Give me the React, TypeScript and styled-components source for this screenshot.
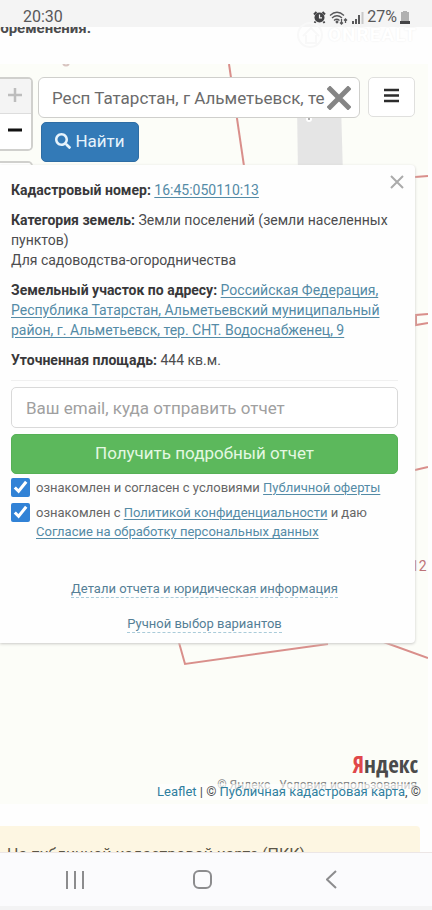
import React from "react";
import styled, { createGlobalStyle } from "styled-components";
import { FaSearch } from "react-icons/fa";

const GlobalStyle = createGlobalStyle`
  *, *::before, *::after { box-sizing: border-box; }
  body { margin: 0; background: #fefefe; }
  button, input { font: inherit; }
`;

const Screen = styled.div`
  display: flex;
  flex-direction: column;
  height: 100vh;
  overflow: hidden;
  font-family: Roboto, "Noto Sans", sans-serif;
  font-size: 14px;
  line-height: 20px;
  color: #4c4c4e;
`;

const StatusBar = styled.header`
  position: relative;
  display: flex;
  flex: none;
  justify-content: space-between;
  align-items: flex-end;
  height: 27px;
  padding: 0 22px 0 23px;
  background: #f4f4f4;
  color: #58585a;
  font-size: 16px;
  line-height: 20px;
`;

const StatusIcons = styled.div`
  display: flex;
  align-items: center;
  gap: 3px;
  height: 20px;
`;

const Watermark = styled.div`
  position: absolute;
  z-index: 2;
  top: 20px;
  right: 0;
  display: flex;
  align-items: center;
  width: 136px;
  overflow: hidden;
  gap: 4px;
  color: #fff;
  font-size: 19px;
  font-weight: 700;
  line-height: 30px;
  letter-spacing: 1px;
  text-shadow: 0 0 2px #ececec;
`;

const Content = styled.main`
  flex: 1;
  min-height: 0;
  overflow: hidden;
`;

const Heading = styled.div`
  display: flex;
  justify-content: flex-end;
  align-items: flex-start;
  width: 91px;
  height: 37px;
  overflow: hidden;
`;

const HeadingText = styled.strong`
  flex: none;
  margin-top: -9px;
  font-size: 15px;
  line-height: 20px;
`;

const MapArea = styled.section`
  position: relative;
  margin-right: 4px;
  padding-top: 13px;
  overflow: hidden;
  background: #fcfdf8;
`;

const MapLines = styled.svg`
  position: absolute;
  top: 0;
  left: 0;
`;

const Controls = styled.div`
  position: relative;
  display: flex;
  align-items: flex-start;
  gap: 8px;
  height: 88px;
  padding-right: 13px;
  overflow: hidden;
`;

const ZoomColumn = styled.div`
  display: flex;
  flex: none;
  flex-direction: column;
  gap: 10px;
  width: 33px;
  margin-right: -3px;
`;

const ZoomBox = styled.div`
  border: 2px solid #d0d0cd;
  border-left: 0;
  border-radius: 0 5px 5px 0;
  background: #fff;
  overflow: hidden;
`;

const ZoomButton = styled.button<{ $dim?: boolean }>`
  display: flex;
  align-items: center;
  justify-content: center;
  width: 100%;
  height: 35px;
  padding: 0 2px 3px 0;
  border: 0;
  border-bottom: ${(p) => (p.$dim ? "1px solid #ddd" : "0")};
  background: ${(p) => (p.$dim ? "#f4f4f4" : "#fff")};
  color: ${(p) => (p.$dim ? "#bdbdbd" : "#111")};
`;

const SearchForm = styled.form`
  flex: 1;
  min-width: 0;
`;

const SearchField = styled.div`
  display: flex;
  align-items: center;
  height: 41px;
  padding: 0 8px 0 13px;
  border: 1px solid #cfcfcc;
  border-radius: 6px;
  background: #fff;
`;

const SearchInput = styled.input`
  flex: 1;
  min-width: 0;
  padding: 0;
  border: 0;
  outline: 0;
  background: none;
  color: #6b6b6b;
  font-size: 17px;
`;

const IconButton = styled.button`
  display: flex;
  padding: 0;
  border: 0;
  background: none;
`;

const FindButton = styled.button`
  display: flex;
  align-items: center;
  justify-content: center;
  gap: 4px;
  width: 98px;
  height: 40px;
  margin: 4px 0 0 3px;
  padding: 0 0 2px;
  border: 1px solid #2e6da4;
  border-radius: 5px;
  background: #337ab7;
  color: #e6f3fc;
  font-size: 17px;
`;

const MenuButton = styled.button`
  display: flex;
  flex: none;
  align-items: center;
  justify-content: center;
  width: 47px;
  height: 40px;
  padding: 0 0 4px;
  border: 1px solid #e0e0de;
  border-radius: 5px;
  background: #fff;
`;

const Panel = styled.article`
  position: relative;
  margin-right: 13px;
  padding: 15px 17px 8px 11px;
  border-radius: 0 4px 4px 0;
  background: #fefefe;
  box-shadow: 0 1px 3px #c9c9c6;
`;

const CloseButton = styled(IconButton)`
  position: absolute;
  top: 10px;
  right: 11px;
`;

const Para = styled.p`
  margin: 0 0 10px;
  b { color: #38383a; }
`;

const Link = styled.a`
  color: #548ba6;
  text-decoration: underline;
  text-underline-offset: 2px;
`;

const Divider = styled.hr`
  margin: 0 0 6px;
  border: 0;
  border-top: 1px solid #f0f0f0;
`;

const EmailInput = styled.input`
  display: block;
  width: 100%;
  height: 41px;
  padding: 0 14px;
  border: 1px solid #d9d9d9;
  border-radius: 5px;
  background: #fff;
  font-size: 17px;
  &::placeholder { color: #a0a0a0; opacity: 1; }
`;

const ReportButton = styled.button`
  display: block;
  width: 100%;
  height: 40px;
  margin: 6px 0 4px;
  padding: 0 0 2px;
  border: 1px solid #56b056;
  border-radius: 5px;
  background: #5cb85c;
  color: #e4f8e2;
  font-size: 17px;
`;

const Consent = styled.label`
  display: flex;
  gap: 6px;
  margin-bottom: 6px;
  color: #666;
  font-size: 13px;
  line-height: 19px;
`;

const Check = styled.input`
  flex: none;
  width: 19px;
  height: 19px;
  margin: 0;
  accent-color: #3182d6;
`;

const MoreLinks = styled.nav`
  display: flex;
  flex-direction: column;
  align-items: center;
  gap: 17px;
  padding: 33px 0 2px;
`;

const DashedLink = styled.a`
  border-bottom: 1px dashed #a9cbd9;
  color: #557f96;
  font-size: 13px;
  line-height: 17px;
  text-decoration: none;
`;

const MapFooter = styled.footer`
  position: relative;
  display: flex;
  flex-direction: column;
  align-items: flex-end;
  padding: 107px 7px 4px;
`;

const YandexLogo = styled.div`
  padding-right: 3px;
  font-family: "Liberation Sans Narrow", "Open Sans Condensed", "Liberation Sans", sans-serif;
  font-size: 23px;
  font-weight: 300;
  line-height: 28px;
  color: #4b4b4b;
  span { color: #e0474a; }
`;

const Copyright = styled.div`
  padding-right: 4px;
  color: #8a8a8a;
  font-size: 12px;
  line-height: 14px;
  white-space: pre;
`;

const Attribution = styled.div`
  position: relative;
  margin-top: -8px;
  background: rgba(255, 255, 255, 0.6);
  font-size: 13px;
  line-height: 16px;
  a { color: #2f7f9f; text-decoration: none; }
`;

const Notice = styled.div`
  margin: 22px 12px 0 0;
  padding: 19px 7px;
  border-radius: 0 4px 4px 0;
  background: #fdf6e2;
  color: #5c5648;
  font-size: 16px;
`;

const NavBar = styled.nav`
  display: grid;
  flex: none;
  grid-template-columns: 1fr 1fr 1fr;
  align-items: center;
  height: 58px;
  padding: 0 37px 0 11px;
  border-top: 1px solid #ece6e6;
  border-bottom: 4px solid #f3f3f4;
  background: #fbfbfd;
`;

const NavButton = styled(IconButton)`
  justify-content: center;
`;

export default function App() {
  return (
    <>
      <GlobalStyle />
      <Screen>
        <StatusBar>
          <span>20:30</span>
          <StatusIcons>
            <svg width="13" height="13" viewBox="0 0 13 13" aria-label="Будильник">
              <path d="M1 3.5 3.5 1M12 3.5 9.500 1M2.500 10.500 1.500 12M10.500 10.500l1 1.500" stroke="#454547" strokeWidth="2" />
              <circle cx="6.500" cy="6.500" r="5" fill="#454547" />
              <path d="M6.500 3.500v3.300H9" fill="none" stroke="#f4f4f4" strokeWidth="1.200" />
            </svg>
            <svg width="20" height="15" viewBox="0 0 20 15" fill="none" stroke="#58585a" strokeWidth="1.300" aria-label="Wi-Fi">
              <path d="M1 5.500Q8-1 15 5.500M3 8q5-4.500 10 0M5 10.500q2.800-2.500 5.500 0" />
              <circle cx="8" cy="12" r=".8" fill="#58585a" />
              <path d="M12.500 9v5m-1.500-1.500 1.500 1.500 1.500-1.500M16.500 13V9M15 10.500l1.500-1.500 1.500 1.500" />
            </svg>
            <svg width="12" height="13" viewBox="0 0 12 13" strokeWidth="2" aria-label="Сигнал">
              <path d="M1 13v-3M4 13V8M7 13V4" stroke="#58585a" />
              <path d="M10.500 13V1" stroke="#c9c9c9" />
            </svg>
            <span>27%</span>
            <svg width="10" height="13" viewBox="0 0 10 13" aria-label="Батарея">
              <path d="M3 0h4v1h2v9H1V1h2z" fill="#b0b0b0" />
              <path d="M0 10h10v3H0z" fill="#454547" />
            </svg>
          </StatusIcons>
          <Watermark>
            <svg width="28" height="30" viewBox="0 0 28 30" fill="none" stroke="#f8f8f8" strokeWidth="2">
              <circle cx="14" cy="15" r="12" />
              <path d="m7 16 8-8 8 8M10 15v8h10v-8" />
            </svg>
            ONREALT
          </Watermark>
        </StatusBar>

        <Content>
          <Heading>
            <HeadingText>обременения.</HeadingText>
          </Heading>

          <MapArea>
            <MapLines width="428" height="739" viewBox="0 0 428 739" fill="none" stroke="#d98f8b" strokeWidth="2" aria-hidden="true">
              <path d="M297 40h44l2 72h-45z" fill="#e5e5e5" stroke="none" />
              <circle cx="309" cy="55" r="2" fill="#999" stroke="#fff" />
              <path d="M229 0 244 102" />
              <path d="M63 0q3 3 6 0" stroke="#d8c4c0" />
              <path d="M415 113l13-1M428 250l-12 1v10l12-2M415 406l13-3" />
              <path d="M178 575l7 25 143-20M378 576l50 18" />
              <text x="411" y="507" fill="#bd7377" stroke="none" fontSize="14">12</text>
            </MapLines>

            <Controls>
              <ZoomColumn>
                <ZoomBox>
                  <ZoomButton $dim aria-label="Приблизить">
                    <svg width="14" height="14" viewBox="0 0 14 14" stroke="currentColor" strokeWidth="2.500"><path d="M7 0v14M0 7h14" /></svg>
                  </ZoomButton>
                  <ZoomButton aria-label="Отдалить">
                    <svg width="14" height="14" viewBox="0 0 14 14" stroke="currentColor" strokeWidth="3"><path d="M0 7h14" /></svg>
                  </ZoomButton>
                </ZoomBox>
                <ZoomBox>
                  <ZoomButton aria-label="Слои" />
                </ZoomBox>
              </ZoomColumn>
              <SearchForm onSubmit={(e) => e.preventDefault()}>
                <SearchField>
                  <SearchInput aria-label="Адрес" defaultValue="Респ Татарстан, г Альметьевск, те" />
                  <IconButton type="button" aria-label="Очистить">
                    <svg width="24" height="24" viewBox="0 0 24 24" stroke="#858585" strokeWidth="5"><path d="m3 3 18 18M21 3 3 21" strokeLinecap="square" /></svg>
                  </IconButton>
                </SearchField>
                <FindButton type="submit">
                  <FaSearch size={16} />
                  Найти
                </FindButton>
              </SearchForm>
              <MenuButton aria-label="Меню">
                <svg width="15" height="15" viewBox="0 0 15 15" stroke="#2c2c2c" strokeWidth="2.500"><path d="M0 2h15M0 7.500h15M0 13h15" /></svg>
              </MenuButton>
            </Controls>

            <Panel>
              <CloseButton aria-label="Закрыть">
                <svg width="14" height="14" viewBox="0 0 14 14" stroke="#ababab" strokeWidth="2"><path d="m1 1 12 12M13 1 1 13" /></svg>
              </CloseButton>
              <Para><b>Кадастровый номер:</b> <Link href="#number">16:45:050110:13</Link></Para>
              <Para>
                <b>Категория земель:</b> Земли поселений (земли населенных пунктов)
                <br />
                Для садоводства-огородничества
              </Para>
              <Para>
                <b>Земельный участок по адресу:</b>{" "}
                <Link href="#address">
                  Российская Федерация, Республика Татарстан, Альметьевский муниципальный район, г. Альметьевск, тер. СНТ. Водоснабженец, 9
                </Link>
              </Para>
              <Para><b>Уточненная площадь:</b> 444 кв.м.</Para>
              <Divider />
              <EmailInput type="email" aria-label="Email" placeholder="Ваш email, куда отправить отчет" />
              <ReportButton>Получить подробный отчет</ReportButton>
              <Consent>
                <Check type="checkbox" defaultChecked />
                <span>ознакомлен и согласен с условиями <Link href="#offer">Публичной оферты</Link></span>
              </Consent>
              <Consent>
                <Check type="checkbox" defaultChecked />
                <span>
                  ознакомлен с <Link href="#privacy">Политикой конфиденциальности</Link> и даю{" "}
                  <Link href="#consent">Согласие на обработку персональных данных</Link>
                </span>
              </Consent>
              <MoreLinks>
                <DashedLink href="#details">Детали отчета и юридическая информация</DashedLink>
                <DashedLink href="#manual">Ручной выбор вариантов</DashedLink>
              </MoreLinks>
            </Panel>

            <MapFooter>
              <YandexLogo><span>Я</span>ндекс</YandexLogo>
              <Copyright>© Яндекс   Условия использования</Copyright>
              <Attribution>
                <a href="#leaflet">Leaflet</a> | © <a href="#pkk">Публичная кадастровая карта</a>, ©
              </Attribution>
            </MapFooter>
          </MapArea>

          <Notice>На публичной кадастровой карте (ПКК)</Notice>
        </Content>

        <NavBar>
          <NavButton aria-label="Недавние">
            <svg width="18" height="18" viewBox="0 0 18 18" stroke="#8c8c8e" strokeWidth="2"><path d="M1 0v18M9 0v18M17 0v18" /></svg>
          </NavButton>
          <NavButton aria-label="Домой">
            <svg width="20" height="20" viewBox="0 0 20 20" fill="none" stroke="#8c8c8e" strokeWidth="2"><rect x="1" y="1" width="17" height="17" rx="5" /></svg>
          </NavButton>
          <NavButton aria-label="Назад">
            <svg width="11" height="19" viewBox="0 0 11 19" fill="none" stroke="#8c8c8e" strokeWidth="2"><path d="M10 1 1 9.500l9 8.500" /></svg>
          </NavButton>
        </NavBar>
      </Screen>
    </>
  );
}
